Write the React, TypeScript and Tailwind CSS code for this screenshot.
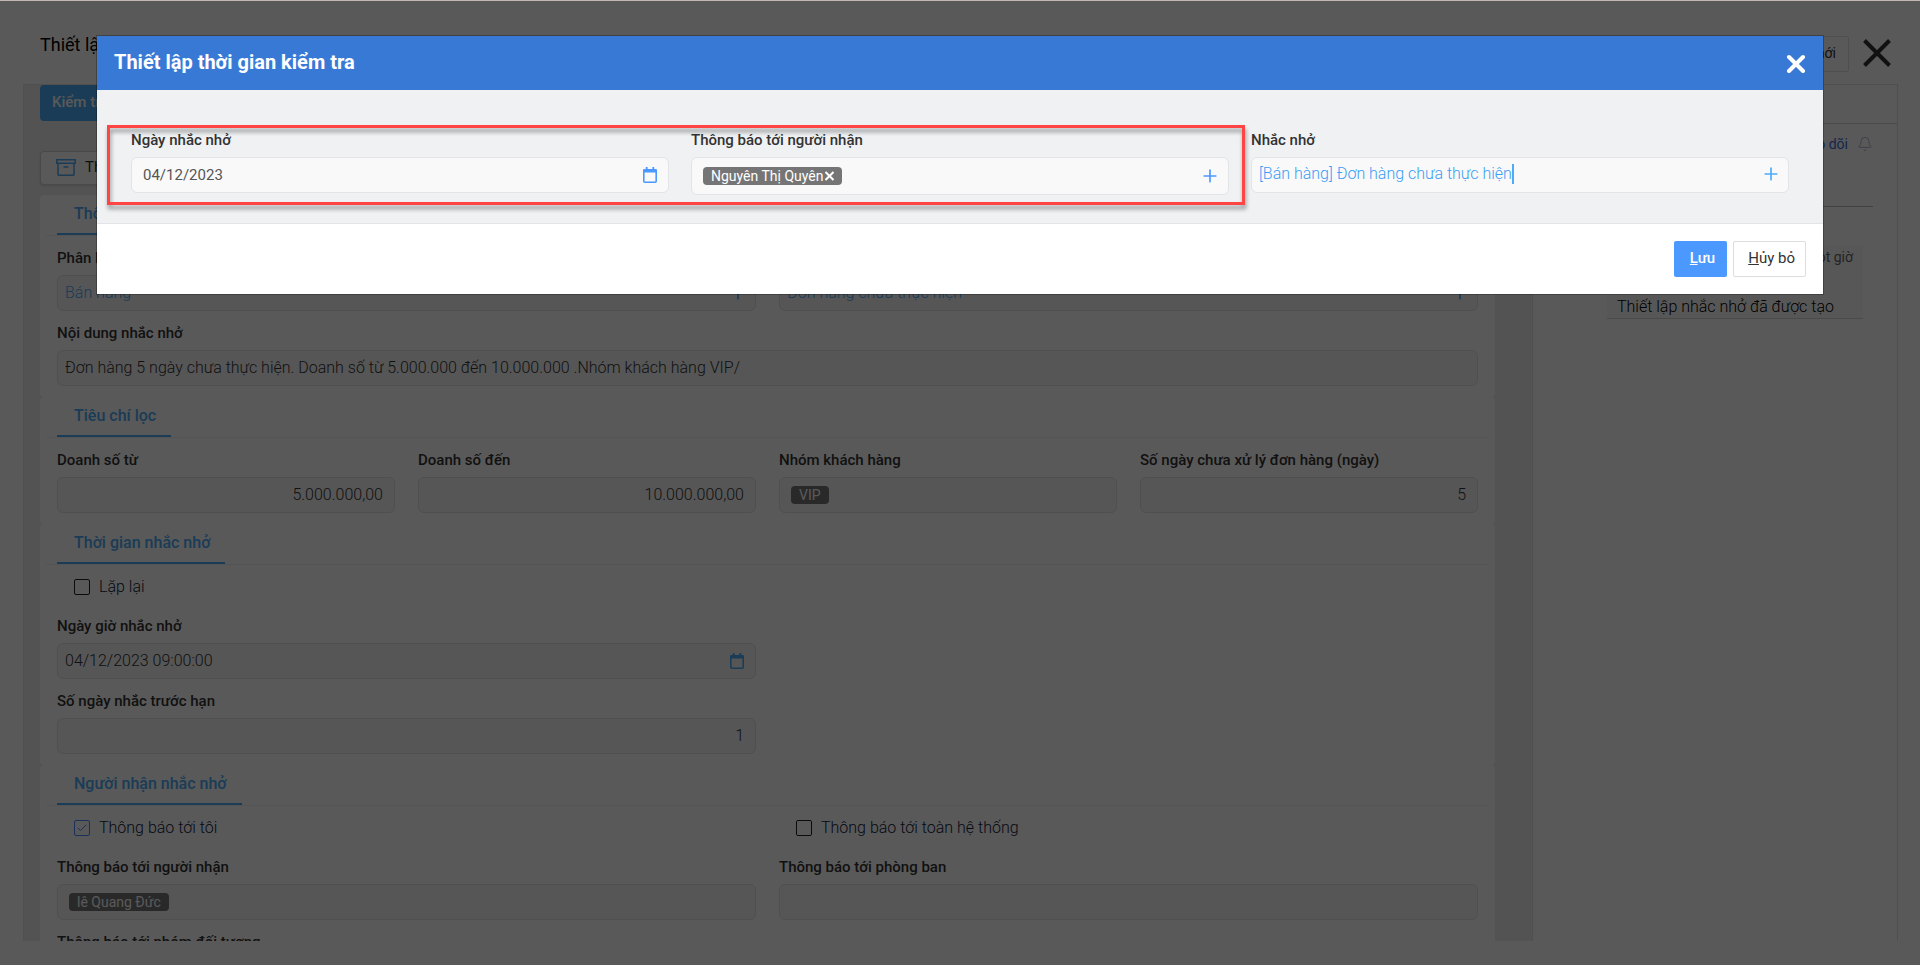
import { useState } from 'react'
import type { ReactNode } from 'react'
import { Bell, Check, Plus } from 'lucide-react'

function CalendarIcon() {
  return (
    <svg width="14" height="16" viewBox="0 0 14 16" fill="none" aria-hidden="true">
      <rect x=".8" y="2.800" width="12.400" height="12.400" rx="1" stroke="currentColor" strokeWidth="1.6" />
      <path d="M0 2.500h14v3H0zM2.800 0h1.800v3H2.800zM9.400 0h1.800v3H9.400z" fill="currentColor" />
    </svg>
  )
}

function ArchiveIcon() {
  return (
    <svg width="20" height="17" viewBox="0 0 20 17" fill="none" stroke="currentColor" strokeWidth="1.5" aria-hidden="true">
      <path d="M.8.8h18.400v3.500H.8zM2 4.300v11.200q0 .7.700.700h14.600q.7 0 .7-.7V4.300M7.500 8h5" />
    </svg>
  )
}

function Tag({ children }: { children: ReactNode }) {
  return (
    <span className="flex h-[18px] items-center rounded bg-[#757575] px-2 text-sm leading-4 text-white">
      {children}
    </span>
  )
}

type FieldProps = {
  id: string
  label: string
  value?: string
  align?: 'left' | 'right'
  link?: boolean
  tag?: string
  icon?: ReactNode
  className?: string
}

function Field({ id, label, value = '', align = 'left', link, tag, icon, className = '' }: FieldProps) {
  return (
    <div className={className}>
      <label htmlFor={id} className="block h-[39px] pt-3 text-[15px] leading-5 font-medium text-[#333]">
        {label}
      </label>
      <div className="flex h-9 items-center rounded-md border border-[#e2e2e2] bg-[#f6f6f6] pr-[11px] pl-[7px]">
        {tag && (
          <span className="ml-1 flex">
            <Tag>{tag}</Tag>
          </span>
        )}
        <input
          id={id}
          defaultValue={value}
          className={`min-w-0 flex-1 bg-transparent text-base font-light outline-none ${
            align === 'right' ? 'text-right' : ''
          } ${link ? 'text-[#4dabf7]' : 'text-[#333]'}`}
        />
        {icon && <span className="text-[#4dabf7]">{icon}</span>}
      </div>
    </div>
  )
}

function Section({ title, children }: { title: string; children: ReactNode }) {
  return (
    <section className="rounded bg-white pb-[11px]">
      <div className="mx-[6px] border-b border-[#f0f0f0] px-[11px]">
        <h2 className="inline-block h-10 border-b-2 border-[#4dabf7] pt-[7px] pr-[15px] pl-[17px] align-top text-base font-medium text-[#4dabf7]">
          {title}
        </h2>
      </div>
      <div className="px-[17px]">{children}</div>
    </section>
  )
}

function CheckRow({ label, checked = false }: { label: string; checked?: boolean }) {
  const [on, setOn] = useState(checked)
  return (
    <label className="flex h-[39px] items-center gap-[9px] pt-[5px] pl-[17px] text-base font-light text-[#111a3a]">
      <span className="grid size-4">
        <input
          type="checkbox"
          checked={on}
          onChange={(e) => setOn(e.target.checked)}
          className="col-start-1 row-start-1 size-4 appearance-none rounded-xs border border-[#222] checked:border-[#4b88ff]"
        />
        {on && <Check className="pointer-events-none col-start-1 row-start-1 size-3 place-self-center text-[#4b88ff]" />}
      </span>
      {label}
    </label>
  )
}

function Page() {
  return (
    <div className="flex h-full flex-col pb-6">
      <header className="flex h-[84px] shrink-0 items-start justify-between pt-9 pr-[29px] pl-10">
        <h1 className="-mt-[5px] text-lg leading-7 text-black">Thiết lập</h1>
        <div className="flex items-start gap-[14px]">
          <button className="h-9 rounded-xs border border-[#e2e2e2] px-3 pb-[2px] text-sm text-[#333]">Tạo mới</button>
          <button aria-label="Đóng" className="text-[#333]">
            <svg width="28" height="34" viewBox="0 0 28 34" stroke="currentColor" strokeWidth="4" aria-hidden="true">
              <path d="M1.500 4.500l25 25M26.500 4.500l-25 25" />
            </svg>
          </button>
        </div>
      </header>

      <div className="flex min-h-0 flex-1 pr-[22px] pl-[23px]">
        <main className="min-w-0 flex-1 overflow-hidden border-t border-l border-[#e6e6e6] bg-[#eeeeee] pr-[37px] pl-4">
          <button className="mb-[30px] block h-9 rounded bg-[#4dabf7] px-3 pb-[2px] text-[15px] font-medium text-white">
            Kiểm tra
          </button>
          <button className="mb-[10px] flex h-[34px] items-center gap-[9px] rounded border border-[#d0d0d0] bg-white pr-4 pb-[2px] pl-[15px] text-[15px] text-[#333] shadow">
            <span className="text-[#4dabf7]">
              <ArchiveIcon />
            </span>
            Thao tác
          </button>

          <Section title="Thông tin chung">
            <div className="grid grid-cols-2 gap-x-[23px]">
              <Field
                id="group"
                label="Phân loại"
                value="Bán hàng"
                link
                icon={<Plus size={20} className="-mr-1" />}
              />
              <Field
                id="kind"
                label="Nhắc nhở"
                value="Đơn hàng chưa thực hiện"
                link
                icon={<Plus size={20} className="-mr-1" />}
              />
              <Field
                id="content"
                label="Nội dung nhắc nhở"
                value="Đơn hàng 5 ngày chưa thực hiện. Doanh số từ 5.000.000 đến 10.000.000 .Nhóm khách hàng VIP/"
                className="col-span-2"
              />
            </div>
          </Section>

          <Section title="Tiêu chí lọc">
            <div className="grid grid-cols-4 gap-x-[23px]">
              <Field id="from" label="Doanh số từ" value="5.000.000,00" align="right" />
              <Field id="to" label="Doanh số đến" value="10.000.000,00" align="right" />
              <Field id="customers" label="Nhóm khách hàng" tag="VIP" />
              <Field id="days" label="Số ngày chưa xử lý đơn hàng (ngày)" value="5" align="right" />
            </div>
          </Section>

          <Section title="Thời gian nhắc nhở">
            <CheckRow label="Lặp lại" />
            <div className="grid grid-cols-2 gap-x-[23px]">
              <Field id="time" label="Ngày giờ nhắc nhở" value="04/12/2023 09:00:00" icon={<CalendarIcon />} />
              <Field
                id="before"
                label="Số ngày nhắc trước hạn"
                value="1"
                align="right"
                className="col-start-1"
              />
            </div>
          </Section>

          <Section title="Người nhận nhắc nhở">
            <div className="grid grid-cols-2 gap-x-[23px]">
              <CheckRow label="Thông báo tới tôi" checked />
              <CheckRow label="Thông báo tới toàn hệ thống" />
              <Field id="people" label="Thông báo tới người nhận" tag="lê Quang Đức" />
              <Field id="rooms" label="Thông báo tới phòng ban" />
              <Field id="objects" label="Thông báo tới nhóm đối tượng" />
            </div>
          </Section>
        </main>

        <aside className="w-[366px] shrink-0 border border-b-0 border-[#e2e2e2] bg-white">
          <div className="h-[39px] border-b border-[#d8d8d8]" />
          <div className="mr-6 ml-6 flex h-[83px] justify-end gap-[9px] border-b border-[#bbb] pt-2">
            <a href="#follow" className="text-sm leading-6 text-[#3a6fd8]">
              Theo dõi
            </a>
            <Bell className="mt-1 size-4 text-[#8b93b5]" strokeWidth={1} />
          </div>
          <div className="mt-[39px] mr-[34px] ml-[74px] border-b border-[#d4d4d4] bg-[#fafafa] px-[10px]">
            <p className="text-right text-sm leading-[22px] text-[#666]">Một giờ</p>
            <p className="pt-[27px] text-base leading-[23px] font-light text-black">Thiết lập nhắc nhở đã được tạo</p>
          </div>
        </aside>
      </div>
    </div>
  )
}

const modalLabel = 'block h-[27px] text-[15px] leading-5 font-medium text-[#333]'
const modalBox = 'flex items-center rounded-md border border-[#e2e4e7] bg-[#f9f9f9]'

function Modal() {
  return (
    <div
      role="dialog"
      aria-labelledby="modal-title"
      className="mx-[97px] mt-[35px] bg-white shadow-[0_0_0_1px_#00000040]"
    >
      <div className="flex h-[54px] items-center justify-between bg-[#3879d6] pr-[17px] pl-[17px] text-white">
        <h2 id="modal-title" className="pb-[2px] text-xl font-bold">
          Thiết lập thời gian kiểm tra
        </h2>
        <button aria-label="Đóng">
          <svg width="20" height="20" viewBox="0 0 20 20" stroke="currentColor" strokeWidth="4" strokeLinecap="round" aria-hidden="true">
            <path d="M3 4l14 14M17 4l-14 14" />
          </svg>
        </button>
      </div>

      <div className="grid grid-cols-3 gap-x-[22px] border-b border-[#e2e4e7] bg-[#f0f1f3] px-[34px] pt-[35px] pb-[18px]">
        <div className="col-start-1 row-start-1 pt-[5px]">
          <label htmlFor="m-date" className={modalLabel}>
            Ngày nhắc nhở
          </label>
          <div className={`${modalBox} h-9 px-[11px]`}>
            <input
              id="m-date"
              defaultValue="04/12/2023"
              className="min-w-0 flex-1 bg-transparent text-[15px] text-[#555] outline-none"
            />
            <span className="text-[#4b98ff]">
              <CalendarIcon />
            </span>
          </div>
        </div>

        <div className="col-start-2 row-start-1 pt-[5px]">
          <label htmlFor="m-people" className={modalLabel}>
            Thông báo tới người nhận
          </label>
          <div className={`${modalBox} h-[38px] pr-2 pl-[11px]`}>
            <Tag>
              Nguyên Thị Quyên
              <button aria-label="Xóa" className="ml-[2px]">
                <svg width="9" height="10" viewBox="0 0 9 10" stroke="currentColor" strokeWidth="2" aria-hidden="true">
                  <path d="M.500 1l8 8M8.500 1l-8 8" />
                </svg>
              </button>
            </Tag>
            <input id="m-people" className="min-w-0 flex-1 bg-transparent outline-none" />
            <button aria-label="Thêm người nhận" className="text-[#4b98ff]">
              <Plus size={20} />
            </button>
          </div>
        </div>

        <div className="col-start-3 row-start-1 pt-[5px]">
          <label htmlFor="m-kind" className={modalLabel}>
            Nhắc nhở
          </label>
          <div className={`${modalBox} h-9 px-[7px] pb-[2px]`}>
            <input
              id="m-kind"
              size={27}
              defaultValue="[Bán hàng] Đơn hàng chưa thực hiện"
              className="field-sizing-content bg-transparent text-base font-light text-[#3b9df5] outline-none"
            />
            <span className="h-5 w-[2px] bg-[#4dabf7]" />
            <button aria-label="Thêm nhắc nhở" className="ml-auto text-[#4dabf7]">
              <Plus size={20} />
            </button>
          </div>
        </div>

        {/* Callout around the two fields to fill in */}
        <div className="pointer-events-none col-span-2 col-start-1 row-start-1 -mr-4 -ml-6 h-20 border-3 border-[#ff4444] drop-shadow-[1px_4px_2px_#00000066]" />
      </div>

      <div className="flex h-[70px] items-center justify-end gap-[6px] pr-[17px]">
        <button className="h-9 rounded-xs bg-[#4b98ff] pr-3 pb-[2px] pl-4 text-[15px] font-medium text-white">
          <span className="underline">L</span>ưu
        </button>
        <button className="h-9 rounded-xs border border-[#ddd] bg-white pr-[10px] pb-[2px] pl-[14px] text-[15px] text-[#333]">
          <span className="underline">H</span>ủy bỏ
        </button>
      </div>
    </div>
  )
}

export default function App() {
  return (
    <div className="grid h-screen overflow-hidden bg-white font-[Roboto,sans-serif]">
      <div className="col-start-1 row-start-1 h-screen min-w-0">
        <Page />
      </div>
      <div className="z-10 col-start-1 row-start-1 min-w-0 border-t border-[#c4b6b0] bg-black/65 bg-clip-padding">
        <Modal />
      </div>
    </div>
  )
}
